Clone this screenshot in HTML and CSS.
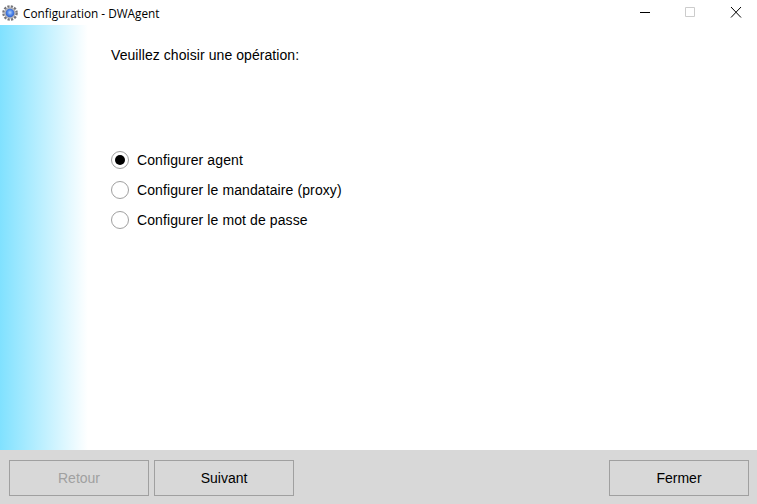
FILE: index.html
```html
<!DOCTYPE html>
<html lang="fr">
<head>
<meta charset="utf-8">
<title>Configuration - DWAgent</title>
<link rel="stylesheet" href="styles.css">
</head>
<body>
<div class="window">
  <header class="titlebar">
    <svg class="app-icon" width="16" height="16" viewBox="0 0 16 16">
      <defs>
        <radialGradient id="glow" cx="50%" cy="45%" r="55%">
          <stop offset="0" stop-color="#b4d6fc"/>
          <stop offset="0.55" stop-color="#4f86ea"/>
          <stop offset="1" stop-color="#2f5fc8"/>
        </radialGradient>
      </defs>
      <circle cx="8" cy="8" r="6.5" fill="none" stroke="#75757a" stroke-width="2.6" stroke-dasharray="2.2 1.2"/>
      <circle cx="8" cy="8" r="5.8" fill="#b4b5ba"/>
      <circle cx="8" cy="8" r="4.3" fill="url(#glow)"/>
    </svg>
    <span class="title">Configuration - DWAgent</span>
    <div class="controls">
      <svg class="control" width="46" height="25" viewBox="0 0 46 25"><path d="M19 12.500h10" stroke="#000" fill="none"/></svg>
      <svg class="control" width="46" height="25" viewBox="0 0 46 25"><path d="M18.500 7.500h9v9h-9z" stroke="#ccc" fill="none"/></svg>
      <svg class="control" width="46" height="25" viewBox="0 0 46 25"><path d="M18 7l10 10.500M28 7l-10 10.500" stroke="#000" fill="none"/></svg>
    </div>
  </header>
  <div class="content">
    <aside class="stripe"></aside>
    <main class="main">
      <p class="prompt">Veuillez choisir une opération:</p>
      <div class="options">
        <label class="option"><span class="radio checked"></span>Configurer agent</label>
        <label class="option"><span class="radio"></span>Configurer le mandataire (proxy)</label>
        <label class="option"><span class="radio"></span>Configurer le mot de passe</label>
      </div>
    </main>
  </div>
  <footer class="footer">
    <div class="nav">
      <button class="btn disabled" type="button">Retour</button>
      <button class="btn" type="button">Suivant</button>
    </div>
    <button class="btn" type="button">Fermer</button>
  </footer>
</div>
</body>
</html>
```
FILE: styles.css
```css
* { box-sizing: border-box; }
html, body { margin: 0; height: 100%; }
body { background: #fff; font-family: "Liberation Sans", Arial, sans-serif; font-size: 14px; letter-spacing: 0.1px; color: #000; overflow: hidden; }
.window { display: flex; flex-direction: column; width: 757px; height: 504px; }
.titlebar { display: flex; align-items: center; height: 25px; padding-left: 2px; flex: none; }
.app-icon { flex: none; margin-right: 5px; }
.title { font-family: "Open Sans", sans-serif; font-size: 11.8px; letter-spacing: 0; color: #000; }
.controls { display: flex; margin-left: auto; margin-right: -2px; }
.control { display: block; }
.content { flex: 1; display: flex; min-height: 0; }
.stripe { width: 88px; flex: none; background: linear-gradient(to right, #80e1ff, #fff); }
.main { flex: 1; padding: 22px 0 0 23px; }
.prompt { margin: 0; line-height: 16px; letter-spacing: 0.07px; }
.options { display: flex; flex-direction: column; margin-top: 82px; }
.option { display: flex; align-items: center; height: 30px; }
.radio { width: 18px; height: 18px; margin-right: 8px; border: 1px solid #a0a0a0; border-radius: 50%; background: #fff; flex: none; display: flex; align-items: center; justify-content: center; }
.radio.checked::after { content: ""; width: 10px; height: 10px; border-radius: 50%; background: #000; }
.footer { flex: none; height: 54px; background: #d8d8d8; display: flex; justify-content: space-between; padding: 10px 8px 8px 9px; }
.nav { display: flex; gap: 5px; }
.btn { width: 140px; height: 36px; background: #d8d8d8; border: 1px solid #a0a0a0; font: inherit; color: #000; padding: 0; }
.btn.disabled { color: #a0a0a0; }
```
